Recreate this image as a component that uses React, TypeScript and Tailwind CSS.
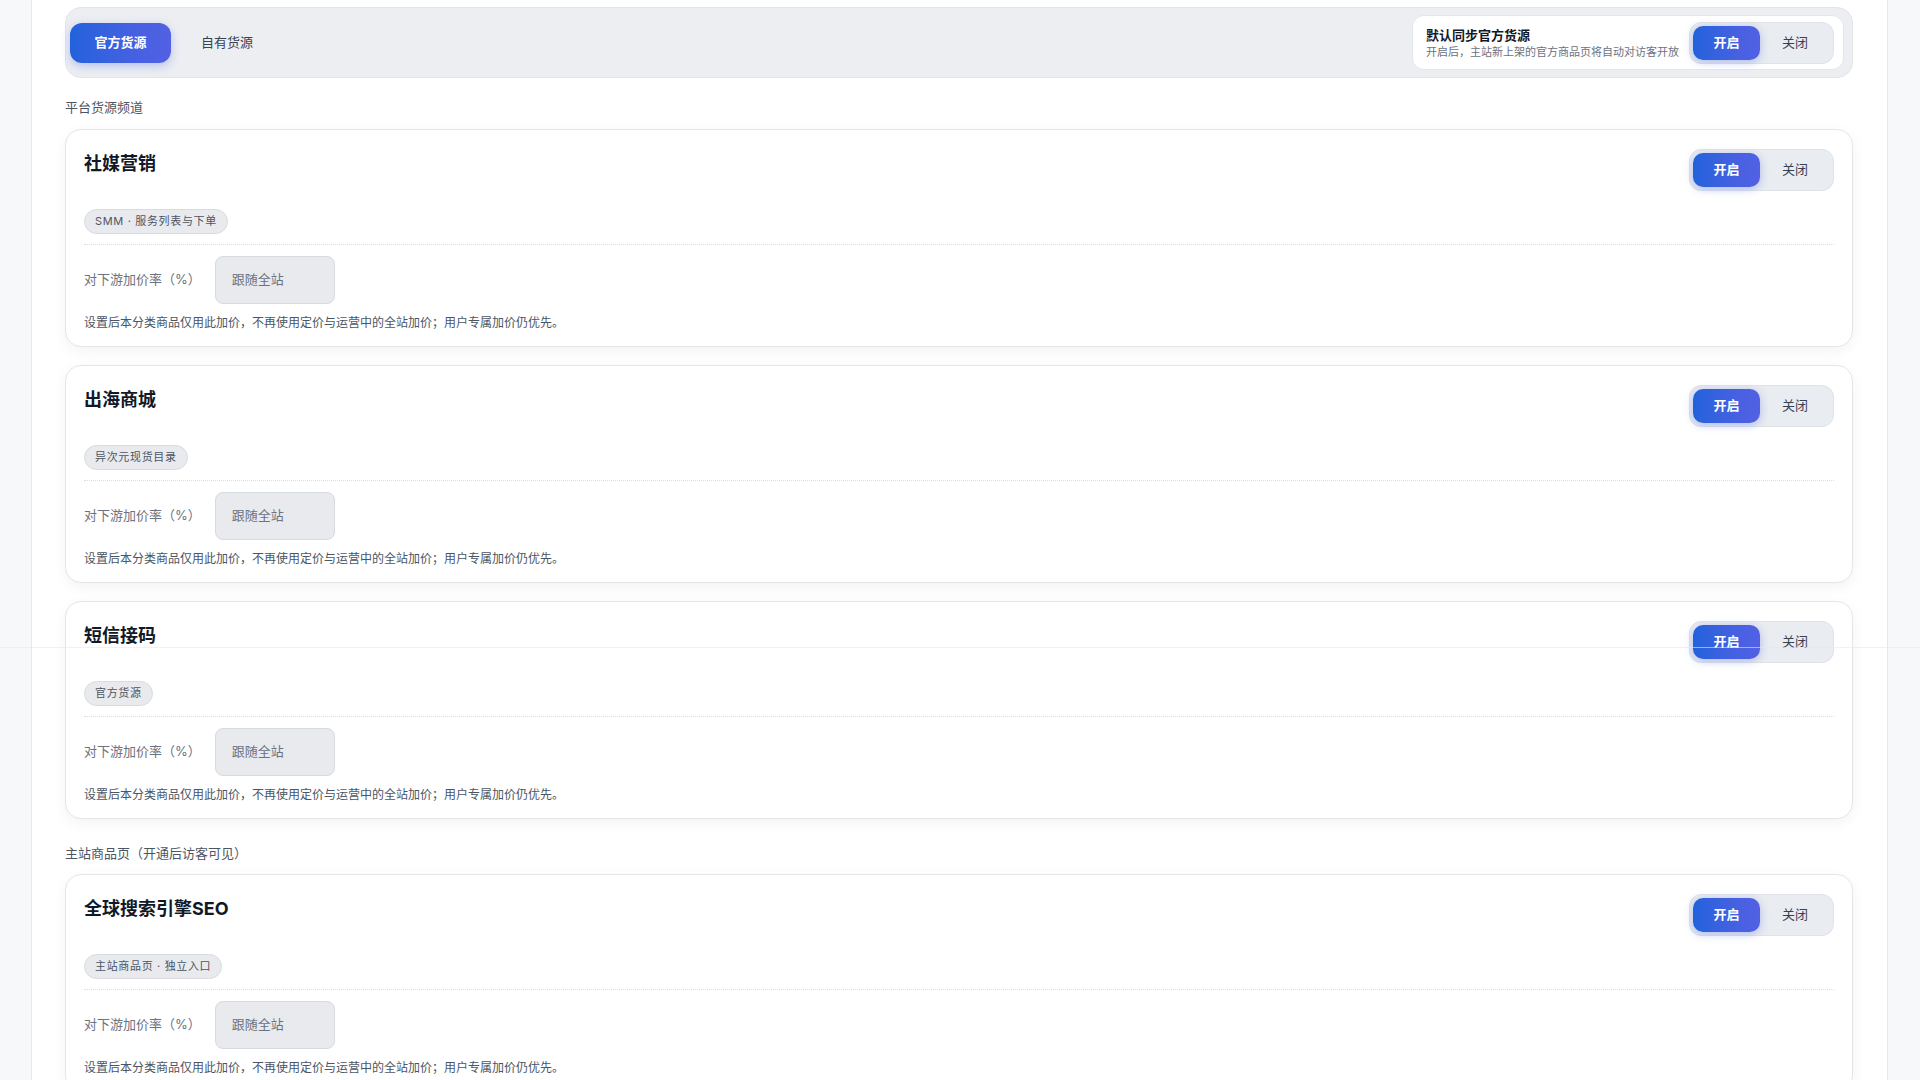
import React from 'react'

const FONT = { fontFamily: 'Inter, "Noto Sans CJK SC", "Noto Sans", sans-serif' }

type Channel = { name: string; tag: string }

const platformChannels: Channel[] = [
    { name: '社媒营销', tag: 'SMM · 服务列表与下单' },
    { name: '出海商城', tag: '异次元现货目录' },
    { name: '短信接码', tag: '官方货源' },
]

const siteChannels: Channel[] = [{ name: '全球搜索引擎SEO', tag: '主站商品页 · 独立入口' }]

function OnOffToggle() {
    return (
        <div className="flex items-center rounded-xl border border-[#dfe3e9] bg-[#e9ecf0] p-[3px]">
            <button
                type="button"
                className="h-[34px] w-[67px] rounded-[10px] bg-gradient-to-r from-[#2162dc] to-[#5360e4] text-[13px] font-bold text-white shadow-[0_2px_8px_rgba(59,91,230,0.35)]"
            >
                开启
            </button>
            <button type="button" className="h-[34px] w-[70px] text-[13px] text-[#374151]">
                关闭
            </button>
        </div>
    )
}

function ChannelCard({ channel }: { channel: Channel }) {
    return (
        <div className="rounded-2xl border border-[#e3e6eb] bg-white px-[18px] pt-[19px] pb-[14px] shadow-[0_4px_14px_rgba(15,23,42,0.05)]">
            <div className="flex items-start justify-between">
                <h3 className="m-0 pt-[3px] text-[18px] leading-6 font-bold text-[#111827]">{channel.name}</h3>
                <OnOffToggle />
            </div>
            <div className="mt-[18px] flex">
                <span className="inline-flex h-[25px] items-center rounded-full border border-[#d8dce2] bg-[#e8eaee] px-[10px] text-[11px] tracking-[0.06em] text-[#4b5563]">
                    {channel.tag}
                </span>
            </div>
            <div className="mt-[10px] border-t border-dotted border-[#d9dde3]" />
            <div className="mt-[11px] flex items-center gap-[14px]">
                <span className="text-[13px] text-[#6b7280]">对下游加价率（%）</span>
                <div className="flex h-12 w-[120px] items-center rounded-lg border border-[#d6dae1] bg-[#e8eaee] pl-4 text-[13px] text-[#6b7280]">
                    跟随全站
                </div>
            </div>
            <p className="m-0 mt-[10px] text-[12px] leading-[18px] text-[#4b5563]">
                设置后本分类商品仅用此加价，不再使用定价与运营中的全站加价；用户专属加价仍优先。
            </p>
        </div>
    )
}

export default function App() {
    return (
        <div className="relative flex min-h-screen bg-white" style={FONT}>
            <div className="w-8 shrink-0 border-r border-[#e6e8ec] bg-[#f7f8fa]" />

            <main className="min-w-0 flex-1 pt-[7px] pr-[34px] pb-10 pl-[33px]">
                {/* source tabs + default sync switch */}
                <div className="flex h-[71px] items-center justify-between rounded-2xl border border-[#e1e4e9] bg-[#eceef2] pr-[8px] pl-[4px]">
                    <div className="flex items-center gap-[30px]">
                        <button
                            type="button"
                            className="h-10 w-[101px] rounded-xl bg-gradient-to-r from-[#2162dc] to-[#5360e4] text-[13px] font-bold text-white shadow-[0_3px_10px_rgba(59,91,230,0.3)]"
                        >
                            官方货源
                        </button>
                        <button type="button" className="text-[13px] text-[#374151]">
                            自有货源
                        </button>
                    </div>
                    <div className="flex h-[55px] items-center gap-[10px] rounded-xl border border-[#e3e6eb] bg-white pr-[9px] pl-[13px]">
                        <div className="flex flex-col">
                            <span className="text-[13px] leading-[18px] font-bold text-[#111827]">默认同步官方货源</span>
                            <span className="text-[11px] leading-4 text-[#6b7280]">
                                开启后，主站新上架的官方商品页将自动对访客开放
                            </span>
                        </div>
                        <OnOffToggle />
                    </div>
                </div>

                <div className="mt-5 mb-[13px] text-[13px] leading-[18px] text-[#4b5563]">平台货源频道</div>
                <div className="flex flex-col gap-[18px]">
                    {platformChannels.map((channel) => (
                        <ChannelCard key={channel.name} channel={channel} />
                    ))}
                </div>

                <div className="mt-[25px] mb-3 text-[13px] leading-[18px] text-[#4b5563]">主站商品页（开通后访客可见）</div>
                <div className="flex flex-col gap-[18px]">
                    {siteChannels.map((channel) => (
                        <ChannelCard key={channel.name} channel={channel} />
                    ))}
                </div>
            </main>

            <div className="w-[33px] shrink-0 border-l border-[#e6e8ec] bg-[#f7f8fa]" />

            <div className="pointer-events-none absolute top-[647px] right-0 left-0 h-px bg-[#e5e7eb]/60" />
        </div>
    )
}
